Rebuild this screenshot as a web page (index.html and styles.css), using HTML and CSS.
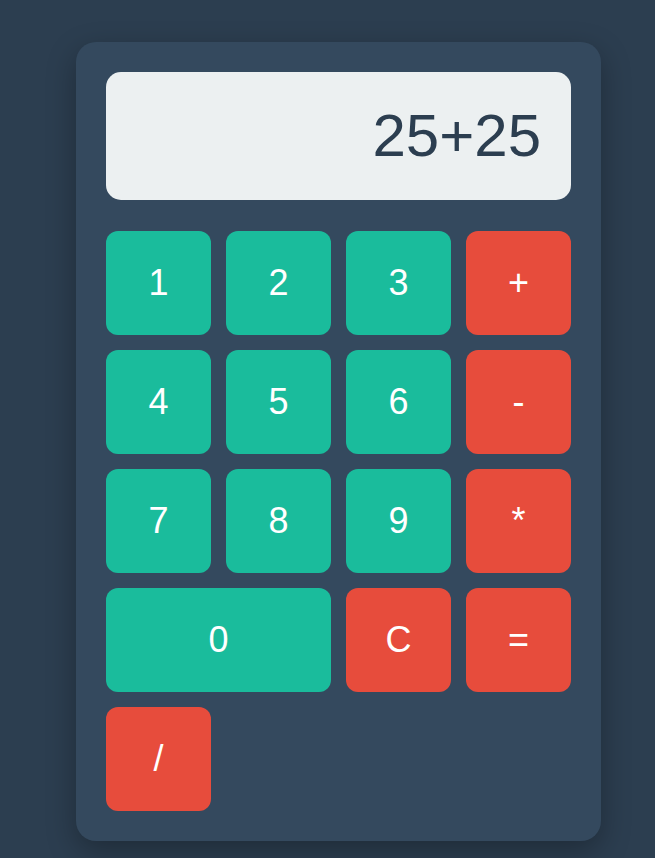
FILE: index.html
```html
<!DOCTYPE html>
<html>
<head>
<meta charset="utf-8">
<link rel="stylesheet" href="styles.css">
</head>
<body>
<div class="calculator">
  <div class="display">25+25</div>
  <div class="keys">
    <button class="key num">1</button>
    <button class="key num">2</button>
    <button class="key num">3</button>
    <button class="key op">+</button>
    <button class="key num">4</button>
    <button class="key num">5</button>
    <button class="key num">6</button>
    <button class="key op">-</button>
    <button class="key num">7</button>
    <button class="key num">8</button>
    <button class="key num">9</button>
    <button class="key op">*</button>
    <button class="key num wide">0</button>
    <button class="key op">C</button>
    <button class="key op">=</button>
    <button class="key op">/</button>
  </div>
</div>
</body>
</html>
```
FILE: styles.css
```css
html, body {
  margin: 0;
  height: 100%;
}
body {
  background: #2c3e50;
  font-family: "Liberation Sans", Arial, sans-serif;
  padding: 42px 0 0 76px;
  box-sizing: border-box;
}
.calculator {
  width: 465px;
  padding: 30px;
  background: #34495e;
  border-radius: 20px;
  box-shadow: 0 10px 30px rgba(0, 0, 0, 0.3);
}
.display {
  background: #ecf0f1;
  color: #2c3e50;
  border-radius: 15px;
  padding: 30px;
  font-size: 60px;
  line-height: 68px;
  text-align: right;
  margin-bottom: 31px;
}
.keys {
  display: grid;
  grid-template-columns: repeat(4, 105px);
  grid-auto-rows: 104px;
  gap: 15px;
}
.key {
  border: none;
  border-radius: 12px;
  color: #ffffff;
  font-family: "Liberation Sans", Arial, sans-serif;
  font-size: 36px;
  padding: 0;
  margin: 0;
}
.num {
  background: #1abc9c;
}
.op {
  background: #e74c3c;
}
.wide {
  grid-column: span 2;
}
```
